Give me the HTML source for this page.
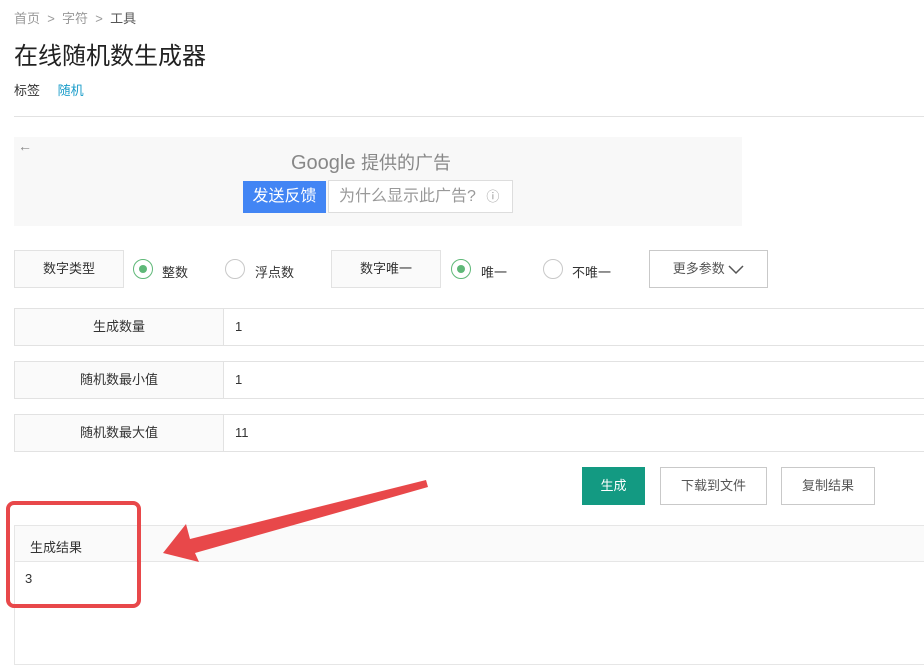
<!DOCTYPE html>
<html><head><meta charset="utf-8"><style>
*{margin:0;padding:0;box-sizing:border-box}
body{width:924px;height:650px;overflow:hidden;background:#fff;font-family:"Liberation Sans","Noto Sans CJK SC",sans-serif;color:#333;position:relative;font-size:13px}
.a{position:absolute;white-space:nowrap}
.box{position:absolute;border:1px solid #e2e2e2;background:#fafafa;text-align:center;font-size:13px;color:#333}
.radio{position:absolute;width:20px;height:20px;border-radius:50%;border:1px solid #c8c8c8;background:#fff}
.radio.on{border-color:#5fb878}
.radio.on::after{content:"";position:absolute;left:5px;top:5px;width:8px;height:8px;border-radius:50%;background:#5fb878}
.row{position:absolute;left:14px;right:-2px;height:38px;border:1px solid #e2e2e2;}
.row .l{position:absolute;left:0;top:0;width:209px;height:36px;background:#fafafa;border-right:1px solid #e2e2e2;text-align:center;line-height:36px}
.row .v{position:absolute;left:220px;top:0;line-height:36px}
.btn{position:absolute;height:38px;border:1px solid #c9c9c9;background:#fff;text-align:center;line-height:36px;color:#555}
</style></head><body>
<div class="a" style="left:14px;top:8px;color:#999;font-size:13px">首页 &nbsp;&gt;&nbsp; 字符 &nbsp;&gt;&nbsp; <span style="color:#555">工具</span></div>
<div class="a" style="left:14px;top:36px;font-size:24px;color:#222">在线随机数生成器</div>
<div class="a" style="left:14px;top:80px;font-size:13px;color:#333">标签 <span style="color:#1a9cc9;margin-left:14px">随机</span></div>
<div class="a" style="left:14px;top:116px;width:910px;height:1px;background:#e2e2e2"></div>
<div class="a" style="left:14px;top:137px;width:728px;height:89px;background:#f8f8f8"></div>
<div class="a" style="left:18px;top:138px;color:#888;font-size:14px">←</div>
<div class="a" style="left:291px;top:149px;font-size:20px;color:#888">Google <span style="font-size:18px">提供的广告</span></div>
<div class="a" style="left:243px;top:181px;width:83px;height:32px;background:#4285f4;color:#fff;font-size:16px;line-height:32px;text-align:center">发送反馈</div>
<div class="a" style="left:328px;top:180px;width:185px;height:33px;background:#fff;border:1px solid #ddd;color:#999;font-size:16px;line-height:31px;padding-left:10px">为什么显示此广告? <span style="font-size:13px;margin-left:6px">ⓘ</span></div>
<div class="box" style="left:14px;top:250px;width:110px;height:38px;line-height:36px">数字类型</div>
<div class="radio on" style="left:133px;top:259px"></div><div class="a" style="left:162px;top:262px">整数</div>
<div class="radio" style="left:225px;top:259px"></div><div class="a" style="left:255px;top:262px">浮点数</div>
<div class="box" style="left:331px;top:250px;width:110px;height:38px;line-height:36px">数字唯一</div>
<div class="radio on" style="left:451px;top:259px"></div><div class="a" style="left:481px;top:262px">唯一</div>
<div class="radio" style="left:543px;top:259px"></div><div class="a" style="left:572px;top:262px">不唯一</div>
<div class="btn" style="left:649px;top:250px;width:119px">更多参数 <svg width="16" height="10" viewBox="0 0 16 10" style="vertical-align:middle"><path d="M1 1l7 7 7-7" fill="none" stroke="#555" stroke-width="1.5"/></svg></div>
<div class="row" style="top:308px"><div class="l">生成数量</div><div class="v">1</div></div>
<div class="row" style="top:361px"><div class="l">随机数最小值</div><div class="v">1</div></div>
<div class="row" style="top:414px"><div class="l">随机数最大值</div><div class="v">11</div></div>
<div class="btn" style="left:582px;top:467px;width:63px;background:#139a82;border-color:#139a82;color:#fff">生成</div>
<div class="btn" style="left:660px;top:467px;width:107px">下载到文件</div>
<div class="btn" style="left:781px;top:467px;width:94px">复制结果</div>
<div class="a" style="left:14px;top:525px;width:912px;height:140px;border:1px solid #e6e6e6"></div>
<div class="a" style="left:15px;top:526px;width:910px;height:36px;background:#fafafa;border-bottom:1px solid #e6e6e6"></div>
<div class="a" style="left:30px;top:537px">生成结果</div>
<div class="a" style="left:25px;top:571px">3</div>
<svg class="a" style="left:0;top:0" width="924" height="650">
<rect x="8" y="503" width="131" height="103" rx="6" fill="none" stroke="#e8484a" stroke-width="4"/>
<path d="M426 480 L428 487 L195 553 L199 562 L163 553 L186 524 L190 539 Z" fill="#e8484a"/>
</svg>
</body></html>
